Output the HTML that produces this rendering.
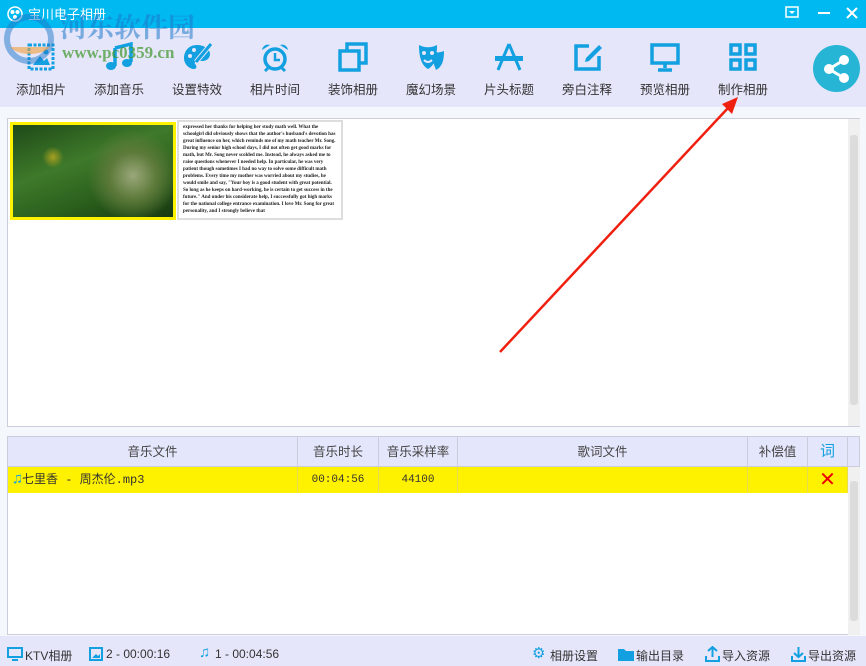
<!DOCTYPE html>
<html><head><meta charset="utf-8"><style>
*{margin:0;padding:0;box-sizing:border-box}
body{width:866px;height:666px;overflow:hidden;background:#f4f8fc;font-family:"Liberation Sans","Noto Sans CJK SC",sans-serif;position:relative;font-size:12px;color:#333}
.abs{position:absolute}
.title{left:0;top:0;width:866px;height:28px;background:#00b9f1}
.tb{left:0;top:28px;width:866px;height:79px;background:#e6e6fb}
.item{position:absolute;top:0;width:78px;text-align:center}
.item svg{position:absolute;left:24px;top:14px}
.item span{position:absolute;top:51px;left:0;width:78px;font-size:12.5px;color:#333}
.th{position:absolute;top:0;height:30px;line-height:30px;text-align:center;border-right:1px solid #ccd;font-size:12.5px;color:#444}
.td{position:absolute;top:0;height:26px;line-height:26px;text-align:center;border-right:1px solid #e6dc50;font-size:11px;color:#333;font-family:"Liberation Mono","Noto Sans CJK SC",monospace}
.sb span{position:absolute;top:11px;font-size:12px;color:#333}
</style></head><body>
<div class="abs title">
 <svg class="abs" style="left:7px;top:6px" width="16" height="16" viewBox="0 0 16 16"><circle cx="8" cy="8" r="7" fill="none" stroke="#fff" stroke-width="1.5"/><circle cx="5.5" cy="6" r="2" fill="#fff"/><circle cx="10.5" cy="6" r="2" fill="#fff"/><circle cx="8" cy="11" r="2" fill="#fff"/></svg>
 <div class="abs" style="left:28px;top:4px;color:#fff;font-size:13px">宝川电子相册</div>
 <svg class="abs" style="left:785px;top:6px" width="14" height="12"><rect x="1" y="1" width="12" height="10" fill="none" stroke="#fff" stroke-width="1.5"/><path d="M4 5h6l-3 3z" fill="#fff"/></svg>
 <div class="abs" style="left:818px;top:12px;width:12px;height:2px;background:#fff"></div>
 <svg class="abs" style="left:845px;top:6px" width="14" height="14"><path d="M2 2L12 12M12 2L2 12" stroke="#fff" stroke-width="2"/></svg>
</div>
<div class="abs tb">
 <div class="item" style="left:2px"><svg width="30" height="30"><rect x="3" y="3" width="24" height="24" fill="none" stroke="#12a0e0" stroke-width="3" stroke-dasharray="3 1.5"/><path d="M7 23l7-9 4 5 3-3 3 7z" fill="#12a0e0"/><circle cx="20" cy="10" r="2.5" fill="#12a0e0"/></svg><span>添加相片</span></div>
 <div class="item" style="left:80px"><svg width="30" height="30"><path d="M11 6l16-4v18" fill="none" stroke="#12a0e0" stroke-width="3.5"/><path d="M11 6v18" stroke="#12a0e0" stroke-width="3.5"/><ellipse cx="7" cy="24" rx="5" ry="4" fill="#12a0e0"/><ellipse cx="23" cy="21" rx="5" ry="4" fill="#12a0e0"/></svg><span>添加音乐</span></div>
 <div class="item" style="left:158px"><svg width="30" height="30"><path d="M15 3C6 3 2 10 2 16c0 7 6 11 10 11 3 0 3-3 1-5-1-2 1-3 3-3h4c5 0 8-3 8-7C28 7 22 3 15 3z" fill="#12a0e0"/><circle cx="8" cy="14" r="2" fill="#e6e6fb"/><circle cx="12" cy="8" r="2" fill="#e6e6fb"/><path d="M29 2L14 20" stroke="#e6e6fb" stroke-width="5"/><path d="M29 2L14 20" stroke="#12a0e0" stroke-width="3"/></svg><span>设置特效</span></div>
 <div class="item" style="left:236px"><svg width="30" height="30"><circle cx="15" cy="17" r="10" fill="none" stroke="#12a0e0" stroke-width="3.5"/><path d="M15 11v7h5" fill="none" stroke="#12a0e0" stroke-width="2.5"/><path d="M2 8a6 6 0 0 1 8-5zM28 8a6 6 0 0 0-8-5z" fill="#12a0e0"/><path d="M8 26l-3 3M22 26l3 3" stroke="#12a0e0" stroke-width="3"/></svg><span>相片时间</span></div>
 <div class="item" style="left:314px"><svg width="30" height="30"><rect x="9" y="2" width="19" height="19" fill="none" stroke="#12a0e0" stroke-width="3.5"/><rect x="2" y="9" width="19" height="19" fill="#e6e6fb" stroke="#12a0e0" stroke-width="3.5"/></svg><span>装饰相册</span></div>
 <div class="item" style="left:392px"><svg width="30" height="30"><path d="M3 3c6 3 12 3 18 0 0 12-2 20-9 24C5 23 3 14 3 3z" fill="#12a0e0"/><path d="M13 9c5 2 10 2 15 0 0 10-2 16-8 19" fill="#12a0e0"/><circle cx="8" cy="11" r="2" fill="#e6e6fb"/><circle cx="16" cy="11" r="2" fill="#e6e6fb"/><path d="M8 18q4 4 8 0" stroke="#e6e6fb" stroke-width="2" fill="none"/></svg><span>魔幻场景</span></div>
 <div class="item" style="left:470px"><svg width="30" height="30"><path d="M15 2L4 28M15 2l11 26" stroke="#12a0e0" stroke-width="3"/><rect x="1" y="14" width="28" height="5" fill="#12a0e0"/></svg><span>片头标题</span></div>
 <div class="item" style="left:548px"><svg width="30" height="30"><path d="M17 4H4v23h23V14" fill="none" stroke="#12a0e0" stroke-width="3.5"/><path d="M27 3l-13 13-1 4 4-1 13-13z" fill="#12a0e0"/></svg><span>旁白注释</span></div>
 <div class="item" style="left:626px"><svg width="30" height="30"><rect x="2" y="3" width="26" height="18" fill="none" stroke="#12a0e0" stroke-width="3.5"/><path d="M15 21v5M8 28h14" stroke="#12a0e0" stroke-width="3.5"/></svg><span>预览相册</span></div>
 <div class="item" style="left:704px"><svg width="30" height="30"><g fill="none" stroke="#12a0e0" stroke-width="3.5"><rect x="3" y="3" width="9" height="9"/><rect x="18" y="3" width="9" height="9"/><rect x="3" y="18" width="9" height="9"/><rect x="18" y="18" width="9" height="9"/></g></svg><span>制作相册</span></div>
 <svg class="abs" style="left:813px;top:17px" width="47" height="47"><circle cx="23.5" cy="23.5" r="23.5" fill="#27b5d6"/><g fill="#fff"><circle cx="31" cy="15" r="5"/><circle cx="16" cy="24" r="5"/><circle cx="31" cy="33" r="5"/></g><path d="M31 15L16 24L31 33" stroke="#fff" stroke-width="3" fill="none"/></svg>
</div>
<div class="abs" style="left:60px;top:6px;font-size:27px;font-weight:bold;color:rgba(30,120,200,0.55);font-family:'Noto Serif CJK SC',serif">河东软件园</div>
<div class="abs" style="left:62px;top:43px;font-size:17px;font-weight:bold;color:rgba(60,150,40,0.7);font-family:'Liberation Serif',serif">www.pc0359.cn</div>
<svg class="abs" style="left:2px;top:12px" width="55" height="55"><circle cx="27" cy="27" r="22" fill="none" stroke="rgba(30,120,200,0.5)" stroke-width="6"/><path d="M8 35a22 12 0 0 0 40 0" fill="rgba(240,160,60,0.6)"/></svg>

<div class="abs" style="left:7px;top:118px;width:853px;height:309px;background:#fff;border:1px solid #ccd">
 <div class="abs" style="left:2px;top:3px;width:166px;height:98px;background:#fff200;padding:3px">
  <div style="width:100%;height:100%;background:radial-gradient(circle at 75% 55%,#9aa87a 0,#5d7a3a 18%,transparent 35%),radial-gradient(circle at 25% 35%,#a8a020 0,transparent 8%),linear-gradient(160deg,#1f4a18,#3e7a2a 40%,#2a5e1c 70%,#17380f)"></div>
 </div>
 <div class="abs" style="left:169px;top:1px;width:166px;height:100px;border:2px solid #ddd;background:#fff;padding:2px 4px;font-family:'Liberation Serif',serif;font-size:5px;line-height:7px;color:#222;overflow:hidden;font-weight:bold">expressed her thanks for helping her study math well. What the schoolgirl did obviously shows that the author's husband's devotion has great influence on her, which reminds me of my math teacher Mr. Song. During my senior high school days, I did not often get good marks for math, but Mr. Song never scolded me. Instead, he always asked me to raise questions whenever I needed help. In particular, he was very patient though sometimes I had no way to solve some difficult math problems. Every time my mother was worried about my studies, he would smile and say, "Your boy is a good student with great potential. So long as he keeps on hard-working, he is certain to get success in the future." And under his considerate help, I successfully got high marks for the national college entrance examination. I love Mr. Song for great personality, and I strongly believe that</div>
 <div class="abs" style="left:840px;top:0;width:12px;height:307px;background:#f0f0f0"><div style="margin:16px 2px;height:270px;background:#dcdcdc;border-radius:3px"></div></div>
</div>

<div class="abs" style="left:7px;top:436px;width:853px;height:199px;background:#fff;border:1px solid #ccd">
 <div class="abs" style="left:0;top:0;width:851px;height:30px;background:#e4e6fb;border-bottom:1px solid #ccd">
  <div class="th" style="left:0;width:290px">音乐文件</div>
  <div class="th" style="left:290px;width:81px">音乐时长</div>
  <div class="th" style="left:371px;width:79px">音乐采样率</div>
  <div class="th" style="left:450px;width:290px">歌词文件</div>
  <div class="th" style="left:740px;width:60px">补偿值</div>
  <div class="th" style="left:800px;width:40px;color:#12a0e0;font-size:15px">词</div>
 </div>
 <div class="abs" style="left:0;top:30px;width:840px;height:26px;background:#fff200">
  <div class="td" style="left:0;width:290px;text-align:left;padding-left:5px;font-size:12px"><span style="color:#12a0e0;font-size:15px">♫</span>七里香 - 周杰伦.mp3</div>
  <div class="td" style="left:290px;width:81px">00:04:56</div>
  <div class="td" style="left:371px;width:79px">44100</div>
  <div class="td" style="left:450px;width:290px"></div>
  <div class="td" style="left:740px;width:60px"></div>
  <div class="td" style="left:800px;width:40px;color:#e00;font-size:20px;font-family:'Liberation Sans',sans-serif">✕</div>
 </div>
 <div class="abs" style="left:840px;top:30px;width:12px;height:168px;background:#f0f0f0"><div style="margin:14px 2px;height:140px;background:#dcdcdc;border-radius:3px"></div></div>
</div>

<svg class="abs" style="left:0;top:0" width="866" height="666"><path d="M500 352L728 108" stroke="#f02010" stroke-width="2.5"/><path d="M738 97L722 104L732 114z" fill="#f02010"/></svg>

<div class="abs sb" style="left:0;top:636px;width:866px;height:30px;background:#e6e6fb">
 <svg class="abs" style="left:7px;top:11px" width="16" height="14"><rect x="1" y="1" width="14" height="9" fill="none" stroke="#12a0e0" stroke-width="2"/><path d="M5 13h6" stroke="#12a0e0" stroke-width="2"/></svg><span style="left:25px">KTV相册</span>
 <svg class="abs" style="left:89px;top:11px" width="14" height="14"><rect x="1" y="1" width="12" height="12" fill="none" stroke="#12a0e0" stroke-width="2"/><path d="M3 11l4-4 2 2 2-2v4z" fill="#12a0e0"/></svg><span style="left:106px">2 - 00:00:16</span>
 <span style="left:199px;color:#12a0e0;font-size:15px;top:8px">♫</span><span style="left:215px">1 - 00:04:56</span>
 <span style="left:532px;color:#12a0e0;font-size:15px;top:8px">⚙</span><span style="left:550px">相册设置</span>
 <svg class="abs" style="left:618px;top:12px" width="16" height="13"><path d="M0 1h6l2 2h8v10H0z" fill="#12a0e0"/></svg><span style="left:636px">输出目录</span>
 <svg class="abs" style="left:705px;top:10px" width="15" height="16"><path d="M7.5 1v10M3 5l4.5-4 4.5 4M1 10v5h13v-5" fill="none" stroke="#12a0e0" stroke-width="2"/></svg><span style="left:722px">导入资源</span>
 <svg class="abs" style="left:791px;top:10px" width="15" height="16"><path d="M7.5 1v10M3 7l4.5 4 4.5-4M1 10v5h13v-5" fill="none" stroke="#12a0e0" stroke-width="2"/></svg><span style="left:808px">导出资源</span>
</div>
</body></html>
